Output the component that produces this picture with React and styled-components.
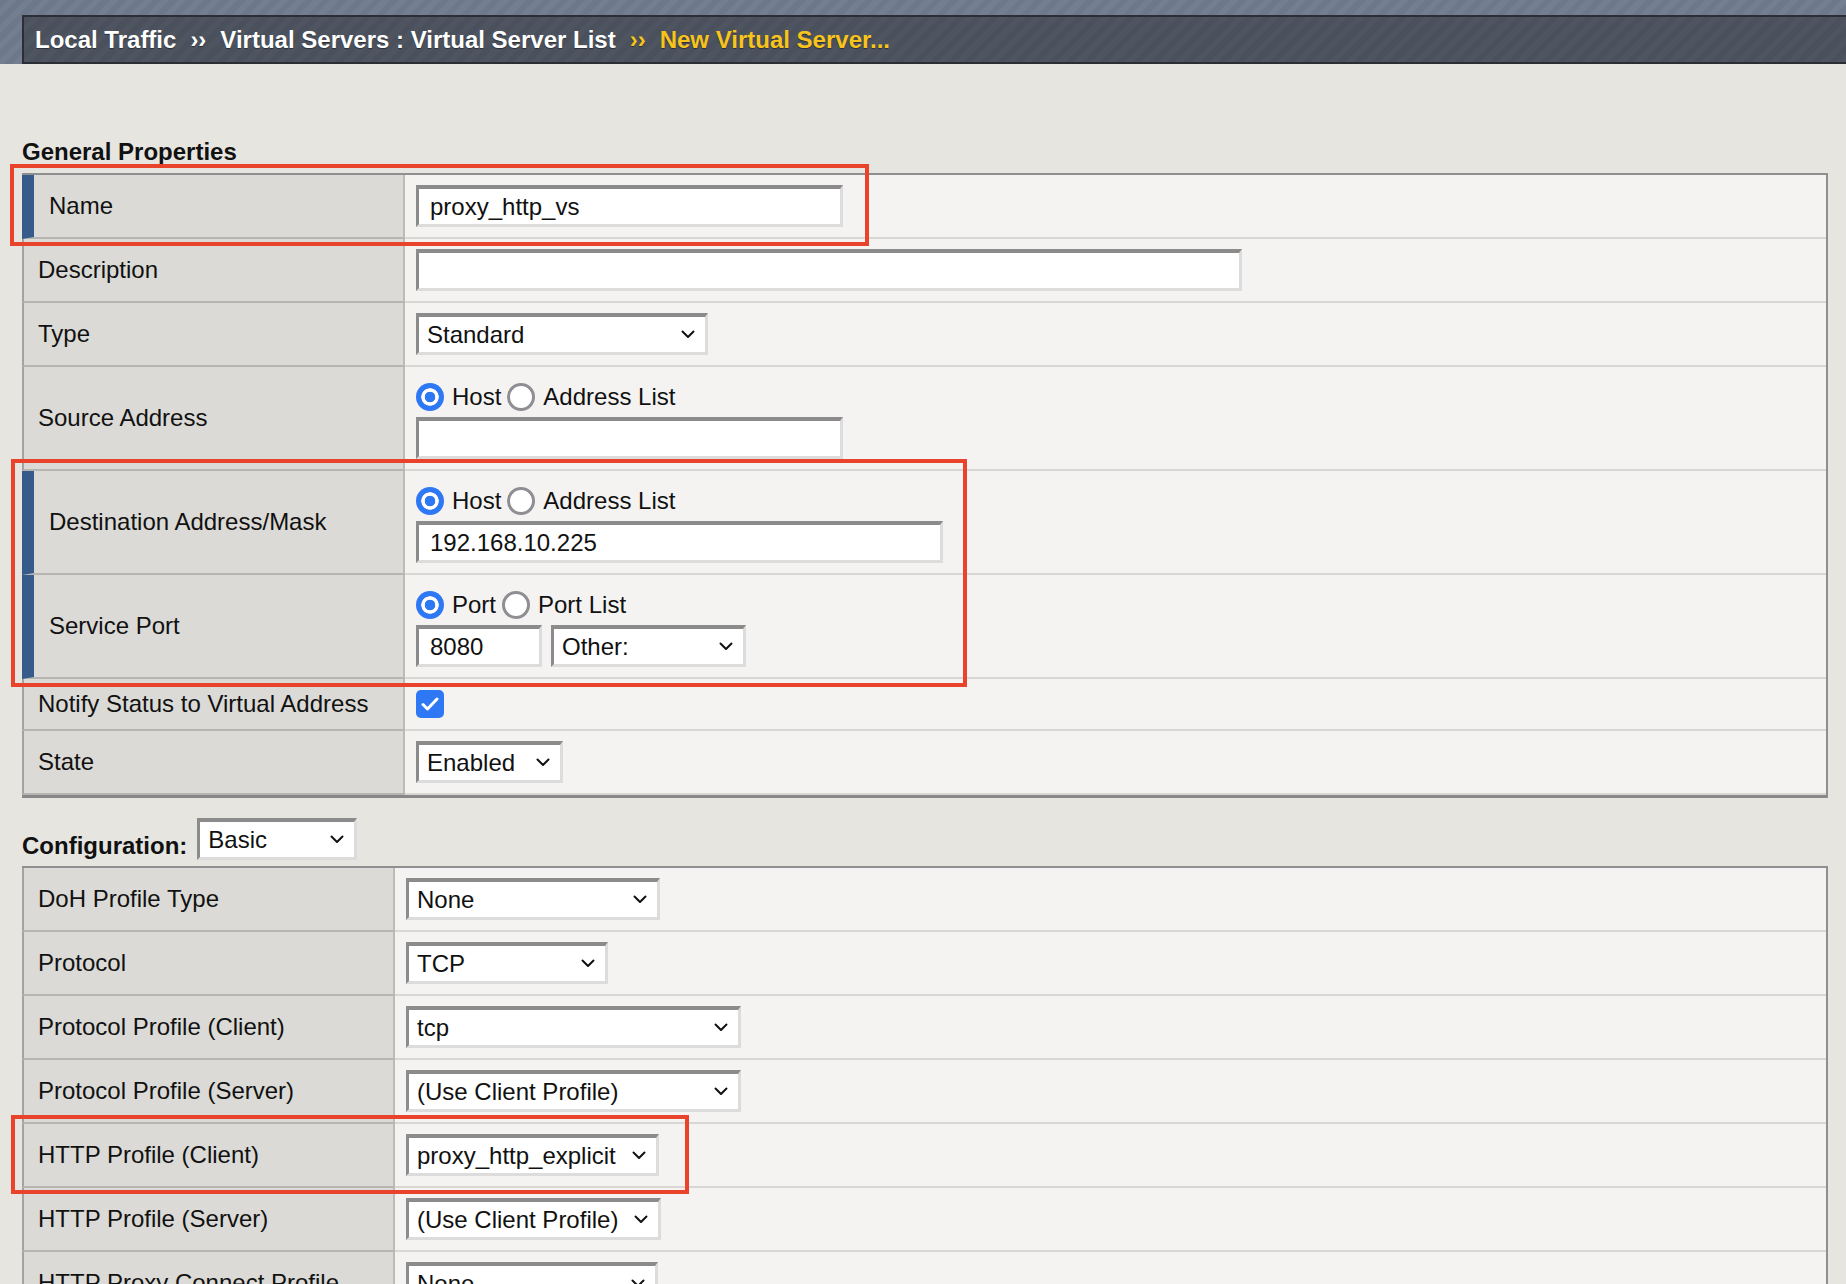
import React from "react";
import styled, { createGlobalStyle } from "styled-components";

const GlobalStyle = createGlobalStyle`
  html, body {
    margin: 0;
    padding: 0;
    background: #e6e5e0;
  }
  body {
    font-family: "Liberation Sans", Arial, Helvetica, sans-serif;
    color: #111;
  }
`;

function Chevron() {
  return (
    <svg width="14" height="9" viewBox="0 0 14 9">
      <polyline
        points="1.5,1.5 7,7 12.5,1.5"
        fill="none"
        stroke="#111"
        strokeWidth="2"
        strokeLinecap="round"
        strokeLinejoin="round"
      />
    </svg>
  );
}

function Select({ value, width }) {
  return (
    <StyledSelect $w={width}>
      <span>{value}</span>
      <Chevron />
    </StyledSelect>
  );
}

function Radio({ checked, label }) {
  return (
    <RadioOption>
      <RadioDot $checked={checked} />
      {label}
    </RadioOption>
  );
}

function FormRow({ label, marked, labelWidth, stacked, children }) {
  return (
    <Row $labelWidth={labelWidth}>
      <Label $marked={marked}>{label}</Label>
      <Value $stacked={stacked}>{children}</Value>
    </Row>
  );
}

function App() {
  return (
    <Page>
      <GlobalStyle />
      <TopStrip>
        <Breadcrumb>
          <Crumb>Local Traffic</Crumb>
          <Sep>››</Sep>
          <Crumb>Virtual Servers : Virtual Server List</Crumb>
          <Sep $current>››</Sep>
          <Crumb $current>New Virtual Server...</Crumb>
        </Breadcrumb>
      </TopStrip>

      <Main>
        <SectionTitle>General Properties</SectionTitle>
        <Table $closed>
          <Row $labelWidth={383}>
            <Label $marked>Name</Label>
            <Value>
              <Input $w={427} defaultValue="proxy_http_vs" readOnly />
            </Value>
            <Highlight $top={-11} $left={-12} $w={859} $h={82} />
          </Row>
          <FormRow label="Description" labelWidth={383}>
            <Input $w={826} defaultValue="" readOnly />
          </FormRow>
          <FormRow label="Type" labelWidth={383}>
            <Select value="Standard" width={292} />
          </FormRow>
          <FormRow label="Source Address" labelWidth={383} stacked>
            <RadioGroup>
              <Radio checked label="Host" />
              <Radio label="Address List" />
            </RadioGroup>
            <Input $w={427} defaultValue="" readOnly />
          </FormRow>
          <Group>
            <FormRow label="Destination Address/Mask" labelWidth={383} marked stacked>
              <RadioGroup>
                <Radio checked label="Host" />
                <Radio label="Address List" />
              </RadioGroup>
              <Input $w={527} defaultValue="192.168.10.225" readOnly />
            </FormRow>
            <FormRow label="Service Port" labelWidth={383} marked stacked>
              <RadioGroup>
                <Radio checked label="Port" />
                <Radio label="Port List" />
              </RadioGroup>
              <Inline>
                <Input $w={126} defaultValue="8080" readOnly />
                <Select value="Other:" width={195} />
              </Inline>
            </FormRow>
            <Highlight $top={-12} $left={-11} $w={956} $h={228} />
          </Group>
          <FormRow label="Notify Status to Virtual Address" labelWidth={383}>
            <Checkbox>
              <svg width="18" height="14" viewBox="0 0 18 14">
                <polyline
                  points="2,7.5 6.5,12 16,2"
                  fill="none"
                  stroke="#fff"
                  strokeWidth="3"
                  strokeLinecap="round"
                  strokeLinejoin="round"
                />
              </svg>
            </Checkbox>
          </FormRow>
          <FormRow label="State" labelWidth={383}>
            <Select value="Enabled" width={147} />
          </FormRow>
        </Table>

        <ConfigBar>
          <ConfigLabel>Configuration:</ConfigLabel>
          <Select value="Basic" width={160} />
        </ConfigBar>

        <Table>
          <FormRow label="DoH Profile Type" labelWidth={373}>
            <Select value="None" width={254} />
          </FormRow>
          <FormRow label="Protocol" labelWidth={373}>
            <Select value="TCP" width={202} />
          </FormRow>
          <FormRow label="Protocol Profile (Client)" labelWidth={373}>
            <Select value="tcp" width={335} />
          </FormRow>
          <FormRow label="Protocol Profile (Server)" labelWidth={373}>
            <Select value="(Use Client Profile)" width={335} />
          </FormRow>
          <Row $labelWidth={373}>
            <Label>HTTP Profile (Client)</Label>
            <Value>
              <Select value="proxy_http_explicit" width={253} />
            </Value>
            <Highlight $top={-9} $left={-11} $w={678} $h={79} />
          </Row>
          <FormRow label="HTTP Profile (Server)" labelWidth={373}>
            <Select value="(Use Client Profile)" width={255} />
          </FormRow>
          <FormRow label="HTTP Proxy Connect Profile" labelWidth={373}>
            <Select value="None" width={252} />
          </FormRow>
        </Table>
      </Main>
    </Page>
  );
}

export default App;

const Page = styled.div`
  height: 100vh;
  overflow: hidden;
`;

const TopStrip = styled.header`
  height: 64px;
  box-sizing: border-box;
  padding: 15px 0 0 22px;
  background: repeating-linear-gradient(
    135deg,
    #6d798b 0 6px,
    #737f90 6px 12px
  );
`;

const Breadcrumb = styled.nav`
  height: 49px;
  box-sizing: border-box;
  border: 2px solid #2b2e34;
  border-right: none;
  background: repeating-linear-gradient(
    135deg,
    #4a515c 0 6px,
    #4e5561 6px 12px
  );
  display: flex;
  align-items: center;
  padding-left: 11px;
  font-size: 24px;
  font-weight: bold;
  white-space: nowrap;
  text-shadow: 0 1px 1px rgba(0, 0, 0, 0.45);
`;

const Crumb = styled.span`
  color: ${(p) => (p.$current ? "#f8c41c" : "#ffffff")};
`;

const Sep = styled.span`
  margin: 0 14px;
  color: ${(p) => (p.$current ? "#f8c41c" : "#ffffff")};
`;

const Main = styled.main`
  padding: 0 18px 0 22px;
`;

const SectionTitle = styled.h2`
  margin: 74px 0 7px;
  font-size: 24px;
  line-height: 28px;
  font-weight: bold;
  color: #111;
`;

const Table = styled.div`
  border-top: 2px solid #8f8f8f;
  border-right: 2px solid #8f8f8f;
  border-bottom: ${(p) => (p.$closed ? "3px solid #888" : "none")};
`;

const Row = styled.div`
  position: relative;
  display: grid;
  grid-template-columns: ${(p) => p.$labelWidth}px 1fr;
`;

const Group = styled.div`
  position: relative;
`;

const Label = styled.div`
  box-sizing: border-box;
  display: flex;
  align-items: center;
  background: #dbdad6;
  border-left: ${(p) => (p.$marked ? "12px solid #365b8b" : "2px solid #a3a3a3")};
  border-right: 2px solid #bcbbb7;
  border-bottom: 2px solid #b6b5b1;
  padding-left: ${(p) => (p.$marked ? "15px" : "14px")};
  font-size: 24px;
  color: #111;
`;

const Value = styled.div`
  display: flex;
  flex-direction: column;
  justify-content: center;
  gap: 6px;
  background: #f4f3f1;
  border-bottom: 2px solid #d8d7d4;
  padding: ${(p) => (p.$stacked ? "16px 11px 10px" : "10px 11px")};
`;

const frame = `
  box-sizing: border-box;
  height: 42px;
  background: #fff;
  border-style: solid;
  border-width: 4px 3px 3px 3px;
  border-color: #8b8b8b #dcdcdc #dcdcdc #8b8b8b;
  font-family: "Liberation Sans", Arial, Helvetica, sans-serif;
  font-size: 24px;
  color: #111;
`;

const Input = styled.input`
  ${frame}
  width: ${(p) => p.$w}px;
  padding: 0 11px;
  outline: none;
  border-radius: 0;
`;

const StyledSelect = styled.div`
  ${frame}
  width: ${(p) => p.$w}px;
  flex: none;
  display: flex;
  align-items: center;
  justify-content: space-between;
  padding: 0 10px 0 8px;
  white-space: nowrap;
`;

const RadioGroup = styled.div`
  display: flex;
  align-items: center;
  height: 28px;
  gap: 6px;
  font-size: 24px;
`;

const RadioOption = styled.label`
  display: flex;
  align-items: center;
  gap: 8px;
`;

const RadioDot = styled.span`
  box-sizing: border-box;
  flex: none;
  width: 28px;
  height: 28px;
  border-radius: 50%;
  background: ${(p) =>
    p.$checked
      ? "radial-gradient(circle, #2f78f5 0 5px, #fff 5.6px 8.4px, #2f78f5 9px)"
      : "#fff"};
  border: ${(p) => (p.$checked ? "none" : "3px solid #8e8e93")};
`;

const Inline = styled.div`
  display: flex;
  align-items: center;
  gap: 9px;
`;

const Checkbox = styled.span`
  flex: none;
  width: 28px;
  height: 28px;
  border-radius: 5px;
  background: #2f78f5;
  display: flex;
  align-items: center;
  justify-content: center;
  margin: 1px 0;
`;

const ConfigBar = styled.div`
  display: flex;
  align-items: flex-end;
  gap: 10px;
  margin: 20px 0 6px;
`;

const ConfigLabel = styled.span`
  font-size: 24px;
  line-height: 28px;
  font-weight: bold;
  color: #111;
`;

const Highlight = styled.div`
  position: absolute;
  z-index: 2;
  top: ${(p) => p.$top}px;
  left: ${(p) => p.$left}px;
  width: ${(p) => p.$w}px;
  height: ${(p) => p.$h}px;
  box-sizing: border-box;
  border: 4px solid #e9442b;
  pointer-events: none;
`;
